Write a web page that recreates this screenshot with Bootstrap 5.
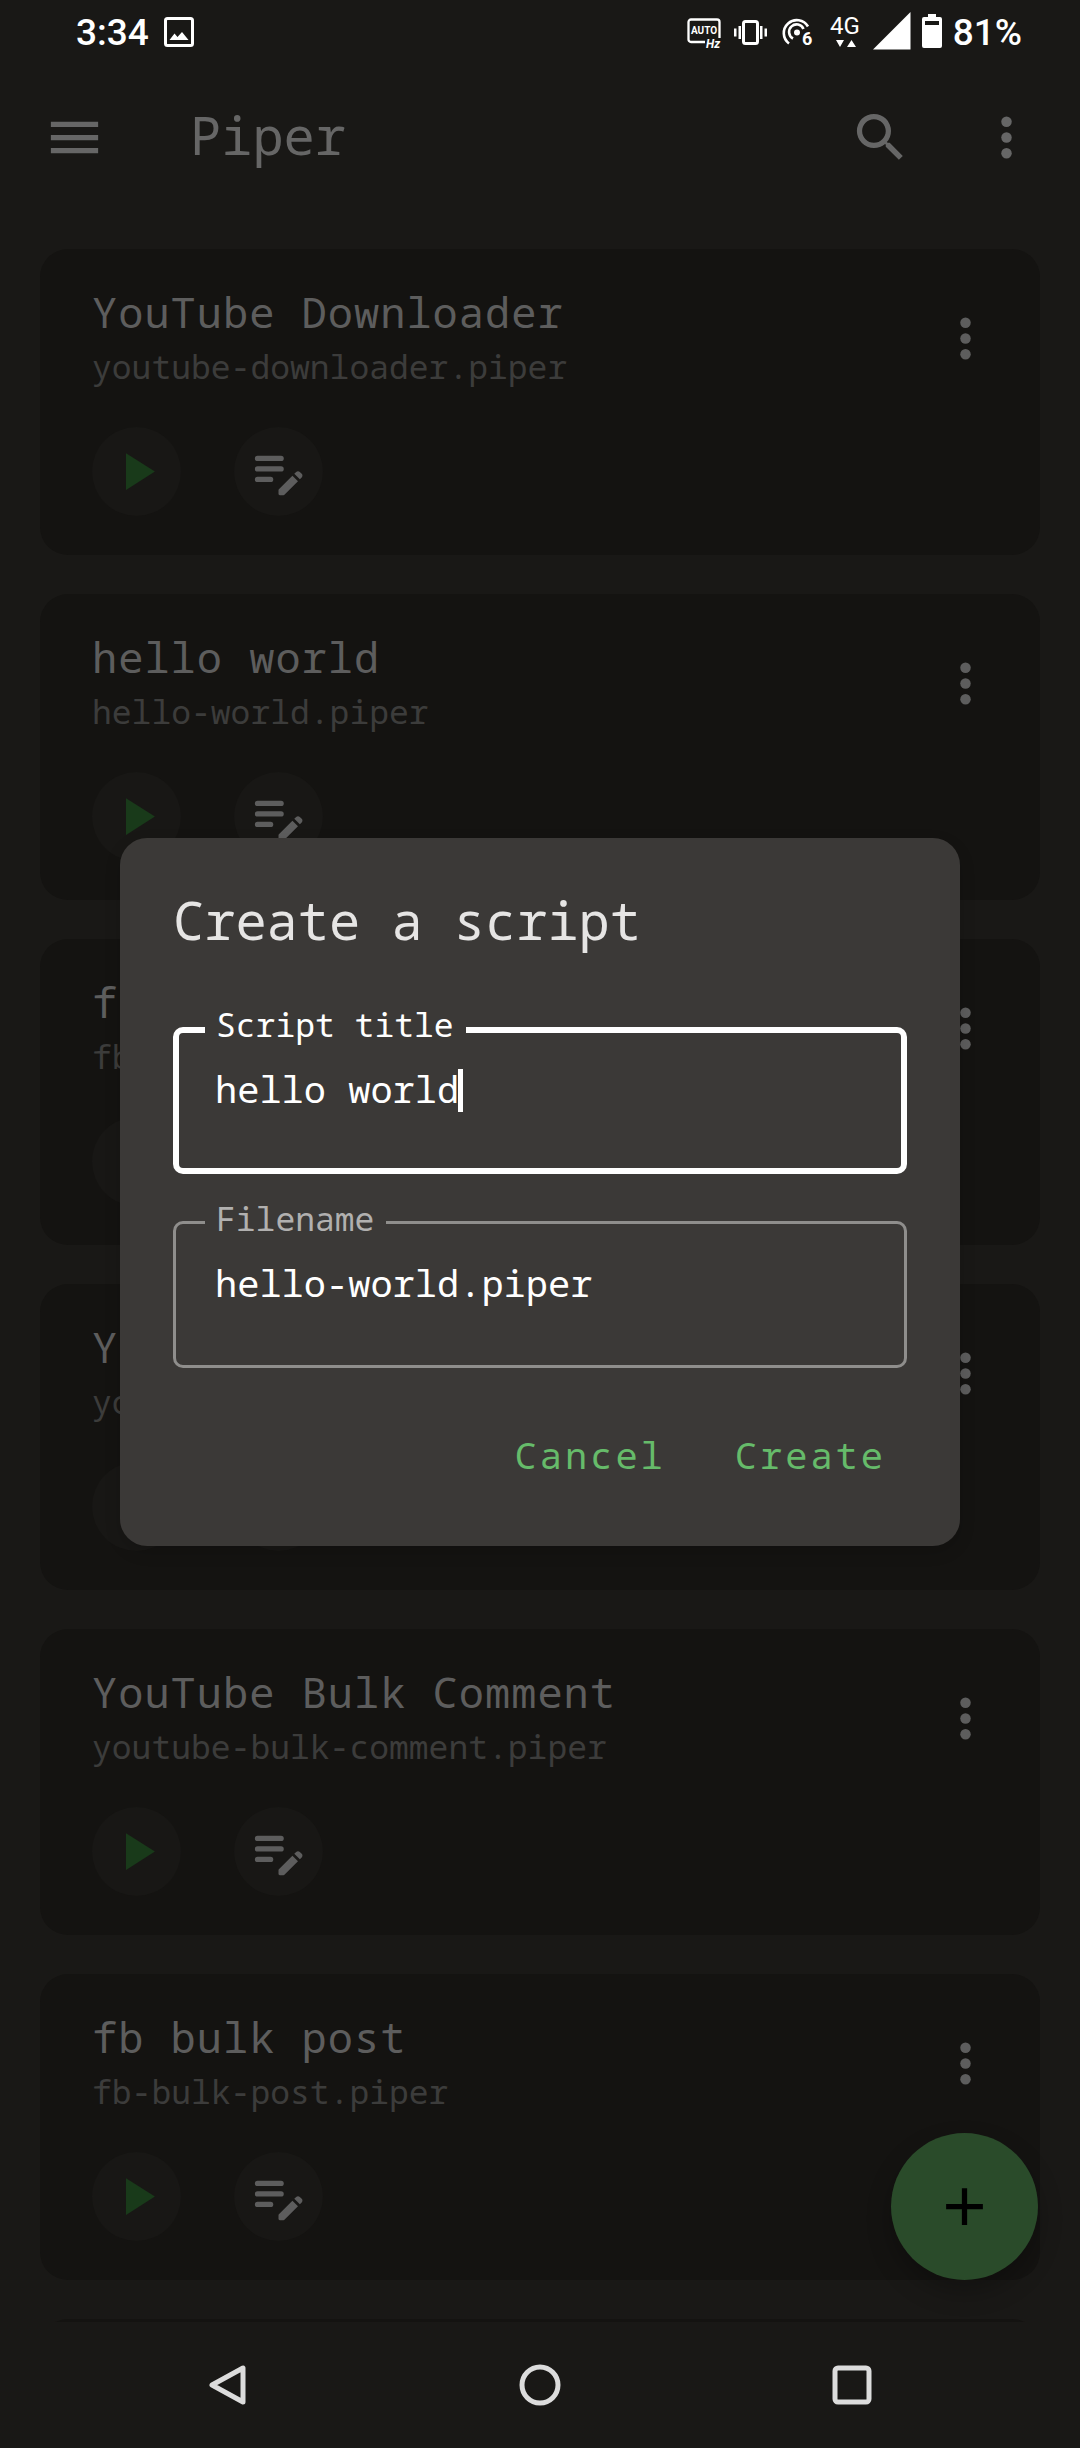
<!DOCTYPE html>
<html lang="en" data-bs-theme="dark">
<head>
<meta charset="utf-8">
<meta name="viewport" content="width=device-width, initial-scale=1">
<title>Piper</title>
<link href="https://cdn.jsdelivr.net/npm/bootstrap@5.3.0/dist/css/bootstrap.min.css" rel="stylesheet">
<style>
  :root {
    --page: #191816;
    --tile: #141311;
    --dim: #666666;
    --tile-title: #5d5d5d;
    --tile-file: #3c3c3b;
    --sheet: #3b3937;
    --accent: #66bb6a;
  }
  body {
    background: var(--page);
    color: #fff;
    font-family: "Noto Sans Mono", "Droid Sans Mono", "DejaVu Sans Mono", monospace;
  }
  svg { display: block; flex: none; }
  .plain-btn { background: none; border: 0; padding: 0; color: inherit; }
  .icon { width: 63px; height: 63px; fill: currentColor; }

  .status-bar { height: 62px; padding: 4px 58px 0 76px; font: 500 37px/40px Roboto, sans-serif; }
  .status-bar svg { fill: #fff; overflow: visible; }
  .status-left { gap: 15px; }
  .status-right { gap: 11px; }

  .app-bar { height: 151px; padding: 0 42px 0 43px; color: var(--dim); }
  .app-bar h1 { font-size: 52px; line-height: 72px; font-weight: 400; color: inherit; margin-left: 84px; padding-bottom: 6px; }
  .app-actions { gap: 63px; }

  .script-list { padding: 36px 40px 0; gap: 39px; min-height: 0; }
  .script-tile {
    background: var(--tile); border-radius: 28px; min-height: 200px;
    padding: 33px 43px 39px 52px; color: var(--tile-title);
  }
  .script-tile h2 { font-size: 42px; line-height: 60px; font-weight: 400; color: inherit; letter-spacing: 1px; }
  .script-tile p { font-size: 33px; line-height: 50px; color: var(--tile-file); }
  .tile-actions { margin-top: 35px; gap: 53px; }
  .round-btn {
    width: 89px; height: 89px; padding: 13px; border: 0; border-radius: 50%;
    background: #181715; color: var(--tile-title);
  }
  .round-btn.run { color: #193a1a; }
  .more { margin-top: 25px; }

  .fab {
    right: 42px; bottom: 168px; width: 147px; height: 147px; border: 0; border-radius: 50%;
    background: #2a4b2a; color: #000; box-shadow: 0 12px 24px rgba(0, 0, 0, .25);
  }

  .nav-keys { height: 126px; background: var(--page); }
  .nav-keys > div { width: 936px; max-width: 100%; }
  .nav-keys svg { fill: none; stroke: #dcdcdc; stroke-width: 5; stroke-linejoin: round; margin: auto; }

  .overlay { top: 62px; bottom: 126px; padding: 0 120px; }
  .sheet { background: var(--sheet); border-radius: 27px; padding: 48px 53px 45px; box-shadow: 0 6px 16px rgba(0, 0, 0, .15); }
  .sheet h2 { font-size: 52px; line-height: 68px; font-weight: 400; color: #e6e5e4; margin-bottom: 73px; }
  .outlined { font-size: 37px; }
  .outlined + .outlined { margin-top: 47px; }
  .outlined input {
    display: block; width: 100%; height: 147px; padding: 37px 39px 61px; border: 3px solid #8f8e8c;
    border-radius: 10px; background: transparent; color: #fff; font-size: 37px; outline: 0;
  }
  .outlined.active input { border: 6px solid #fff; padding: 34px 36px 58px; }
  .outlined label {
    top: -22px; left: 32px; padding: 0 12px 0 11px; background: var(--sheet);
    font-size: 33px; line-height: 40px; color: #b1b0af;
  }
  .outlined.active label { color: #fff; }
  .caret { top: 42px; left: calc(41px + 11ch); width: 5px; height: 43px; background: #fff; }
  .sheet-actions { margin-top: 41px; gap: 27px; }
  .text-btn { color: var(--accent); font-size: 37px; line-height: 92px; padding: 0 21px; letter-spacing: 3px; }
</style>
</head>
<body class="vh-100 overflow-hidden position-relative d-flex flex-column">

<svg width="0" height="0" class="position-absolute" aria-hidden="true">
  <symbol id="dots" viewBox="0 0 24 24"><circle cx="12" cy="6" r="2"/><circle cx="12" cy="12" r="2"/><circle cx="12" cy="18" r="2"/></symbol>
  <symbol id="run" viewBox="0 0 24 24"><path d="M8 5v14l11-7z"/></symbol>
  <symbol id="edit" viewBox="0 0 24 24">
    <rect x="3" y="6" width="11" height="2" rx="1"/><rect x="3" y="10" width="11" height="2" rx="1"/><rect x="3" y="14" width="7" height="2" rx="1"/>
    <path d="M18.01 12.87l.71-.71c.39-.39 1.02-.39 1.41 0l.71.71c.39.39.39 1.02 0 1.41l-.71.71zM17.3 13.58l-5.15 5.15a.5.5 0 0 0-.15.36v1.41c0 .28.22.5.5.5h1.41c.13 0 .26-.05.35-.15l5.16-5.15z"/>
  </symbol>
</svg>

<div class="status-bar d-flex align-items-center justify-content-between flex-shrink-0">
  <div class="status-left d-flex align-items-center">
    <span>3:34</span>
    <svg width="30" height="32" viewBox="0 0 30 32"><rect x="1.5" y="1.5" width="27" height="27" rx="2" style="fill:none;stroke:#fff;stroke-width:3"/><path d="M5.500 23l5-6.500 3 3.500L18 15l6.500 8z"/></svg>
  </div>
  <div class="status-right d-flex align-items-center">
    <svg width="36" height="32" viewBox="0 0 36 32"><path d="M18 25H4a2.500 2.500 0 0 1-2.500-2.500V5A2.500 2.500 0 0 1 4 2.500h26A2.500 2.500 0 0 1 32.500 5v16" style="fill:none;stroke:#fff;stroke-width:2.300"/><text x="17" y="17" text-anchor="middle" font-family="Roboto" font-size="10" font-weight="700">AUTO</text><text x="19" y="31" font-family="Roboto" font-size="12" font-weight="700" font-style="italic">Hz</text></svg>
    <svg width="36" height="26" viewBox="0 1 36 26"><rect x="9.500" y="2.500" width="14" height="22" rx="2" style="fill:none;stroke:#fff;stroke-width:3"/><path d="M4.500 7h2.500v13H4.500zM0 9.500h2.500v8H0zM26 7h2.500v13H26zM30.500 9.500H33v8h-2.500z"/></svg>
    <svg width="36" height="32" viewBox="0 0 36 32"><g style="fill:none;stroke:#fff;stroke-width:2.600"><path d="M8 26.500A13 13 0 1 1 27 9.500"/><path d="M12 21.500A7.500 7.500 0 1 1 22.500 12"/></g><circle cx="16" cy="15.500" r="3"/><text x="21" y="28" font-family="Roboto" font-size="18" font-weight="700">6</text></svg>
    <svg width="34" height="42" viewBox="0 0 34 42"><text x="17" y="22" text-anchor="middle" font-family="Roboto" font-size="24" font-weight="400">4G</text><path d="M8 28h8l-4 7zM19 35h9l-4.500-7z"/></svg>
    <svg width="38" height="42" viewBox="0 0 38 42"><path d="M0 37.500L37.500 0v37.500z"/></svg>
    <svg width="20" height="38" viewBox="0 0 20 38"><path d="M6 0h8v3h4a2 2 0 0 1 2 2v27a2 2 0 0 1-2 2H2a2 2 0 0 1-2-2V5a2 2 0 0 1 2-2h4zM3 7v4h14V7z" fill-rule="evenodd"/></svg>
    <span>81%</span>
  </div>
</div>

<header class="app-bar d-flex align-items-center flex-shrink-0">
  <button class="plain-btn" type="button" aria-label="Menu"><svg class="icon" viewBox="0 0 24 24"><path d="M3 18h18v-2H3zm0-5h18v-2H3zm0-7v2h18V6z"/></svg></button>
  <h1 class="mb-0 flex-grow-1">Piper</h1>
  <div class="app-actions d-flex">
    <button class="plain-btn" type="button" aria-label="Search"><svg class="icon" viewBox="0 0 24 24"><path d="M15.500 14h-.79l-.28-.27A6.471 6.471 0 0 0 16 9.500 6.500 6.500 0 1 0 9.500 16c1.610 0 3.090-.59 4.230-1.570l.27.28v.79l5 4.990L20.490 19zm-6 0C7.010 14 5 11.990 5 9.500S7.010 5 9.500 5 14 7.010 14 9.500 11.990 14 9.500 14z"/></svg></button>
    <button class="plain-btn" type="button" aria-label="More options"><svg class="icon"><use href="#dots"/></svg></button>
  </div>
</header>

<main class="script-list flex-grow-1 overflow-hidden d-flex flex-column">
  <article class="script-tile d-flex align-items-start flex-shrink-0">
    <div class="flex-grow-1">
      <h2 class="mb-0">YouTube Downloader</h2><p class="mb-0">youtube-downloader.piper</p>
      <div class="tile-actions d-flex">
        <button class="round-btn run" type="button" aria-label="Run"><svg class="icon"><use href="#run"/></svg></button>
        <button class="round-btn" type="button" aria-label="Edit"><svg class="icon"><use href="#edit"/></svg></button>
      </div>
    </div>
    <button class="plain-btn more" type="button" aria-label="Options"><svg class="icon"><use href="#dots"/></svg></button>
  </article>
  <article class="script-tile d-flex align-items-start flex-shrink-0">
    <div class="flex-grow-1">
      <h2 class="mb-0">hello world</h2><p class="mb-0">hello-world.piper</p>
      <div class="tile-actions d-flex">
        <button class="round-btn run" type="button" aria-label="Run"><svg class="icon"><use href="#run"/></svg></button>
        <button class="round-btn" type="button" aria-label="Edit"><svg class="icon"><use href="#edit"/></svg></button>
      </div>
    </div>
    <button class="plain-btn more" type="button" aria-label="Options"><svg class="icon"><use href="#dots"/></svg></button>
  </article>
  <article class="script-tile d-flex align-items-start flex-shrink-0">
    <div class="flex-grow-1">
      <h2 class="mb-0">fb</h2><p class="mb-0">fb</p>
      <div class="tile-actions d-flex">
        <button class="round-btn run" type="button" aria-label="Run"><svg class="icon"><use href="#run"/></svg></button>
        <button class="round-btn" type="button" aria-label="Edit"><svg class="icon"><use href="#edit"/></svg></button>
      </div>
    </div>
    <button class="plain-btn more" type="button" aria-label="Options"><svg class="icon"><use href="#dots"/></svg></button>
  </article>
  <article class="script-tile d-flex align-items-start flex-shrink-0">
    <div class="flex-grow-1">
      <h2 class="mb-0">Yo</h2><p class="mb-0">yo</p>
      <div class="tile-actions d-flex">
        <button class="round-btn run" type="button" aria-label="Run"><svg class="icon"><use href="#run"/></svg></button>
        <button class="round-btn" type="button" aria-label="Edit"><svg class="icon"><use href="#edit"/></svg></button>
      </div>
    </div>
    <button class="plain-btn more" type="button" aria-label="Options"><svg class="icon"><use href="#dots"/></svg></button>
  </article>
  <article class="script-tile d-flex align-items-start flex-shrink-0">
    <div class="flex-grow-1">
      <h2 class="mb-0">YouTube Bulk Comment</h2><p class="mb-0">youtube-bulk-comment.piper</p>
      <div class="tile-actions d-flex">
        <button class="round-btn run" type="button" aria-label="Run"><svg class="icon"><use href="#run"/></svg></button>
        <button class="round-btn" type="button" aria-label="Edit"><svg class="icon"><use href="#edit"/></svg></button>
      </div>
    </div>
    <button class="plain-btn more" type="button" aria-label="Options"><svg class="icon"><use href="#dots"/></svg></button>
  </article>
  <article class="script-tile d-flex align-items-start flex-shrink-0">
    <div class="flex-grow-1">
      <h2 class="mb-0">fb bulk post</h2><p class="mb-0">fb-bulk-post.piper</p>
      <div class="tile-actions d-flex">
        <button class="round-btn run" type="button" aria-label="Run"><svg class="icon"><use href="#run"/></svg></button>
        <button class="round-btn" type="button" aria-label="Edit"><svg class="icon"><use href="#edit"/></svg></button>
      </div>
    </div>
    <button class="plain-btn more" type="button" aria-label="Options"><svg class="icon"><use href="#dots"/></svg></button>
  </article>
  <article class="script-tile flex-shrink-0"></article>
</main>

<button class="fab position-absolute d-flex align-items-center justify-content-center" type="button" aria-label="New script"><svg class="icon" viewBox="0 0 24 24"><path d="M19 13h-6v6h-2v-6H5v-2h6V5h2v6h6z"/></svg></button>

<nav class="nav-keys d-flex justify-content-center flex-shrink-0" aria-label="System">
  <div class="d-flex align-items-center">
    <button class="plain-btn w-100" type="button" aria-label="Back"><svg width="42" height="42" viewBox="0 0 42 42"><path d="M36 4v34L5 21z"/></svg></button>
    <button class="plain-btn w-100" type="button" aria-label="Home"><svg width="42" height="42" viewBox="0 0 42 42"><circle cx="21" cy="21" r="18"/></svg></button>
    <button class="plain-btn w-100" type="button" aria-label="Recent apps"><svg width="42" height="42" viewBox="0 0 42 42"><rect x="4" y="4" width="34" height="34" rx="3"/></svg></button>
  </div>
</nav>

<div class="overlay position-absolute start-0 end-0 d-flex align-items-center">
  <form class="sheet w-100" role="dialog" aria-labelledby="sheet-title">
    <h2 id="sheet-title">Create a script</h2>
    <div class="outlined active position-relative">
      <input id="script-title" type="text" value="hello world" spellcheck="false">
      <label class="position-absolute" for="script-title">Script title</label>
      <span class="caret position-absolute"></span>
    </div>
    <div class="outlined position-relative">
      <input id="file-name" type="text" value="hello-world.piper" spellcheck="false">
      <label class="position-absolute" for="file-name">Filename</label>
    </div>
    <div class="sheet-actions d-flex justify-content-end">
      <button class="plain-btn text-btn" type="button">Cancel</button>
      <button class="plain-btn text-btn" type="submit">Create</button>
    </div>
  </form>
</div>

<script src="https://cdn.jsdelivr.net/npm/bootstrap@5.3.0/dist/js/bootstrap.bundle.min.js"></script>
</body>
</html>
